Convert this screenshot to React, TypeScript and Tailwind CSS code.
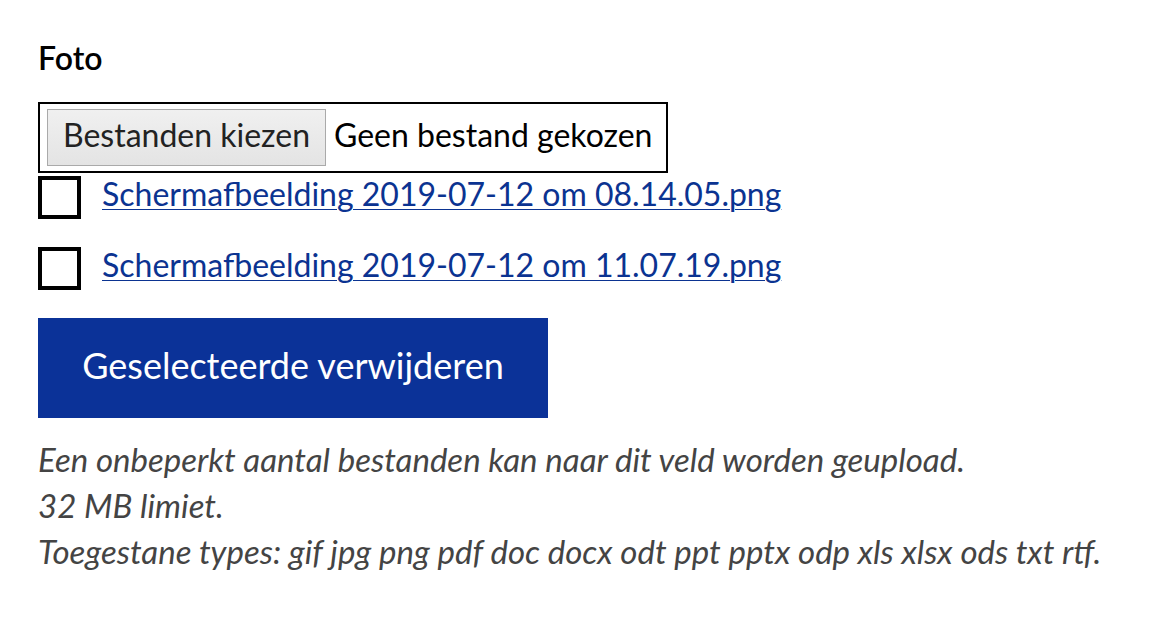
export default function App() {
  const files = [
    "Schermafbeelding 2019-07-12 om 08.14.05.png",
    "Schermafbeelding 2019-07-12 om 11.07.19.png",
  ];
  return (
    <div className="min-h-screen bg-white pl-[38px] pt-[39px] font-['Lato',sans-serif] text-black">
      <div className="text-[32px] font-semibold leading-[38px]">Foto</div>

      <div className="mt-[25px] inline-flex h-[71px] w-[630px] items-center border-2 border-black pl-[7px]">
        <div className="flex h-[57px] w-[279px] items-center justify-center border border-[#aaa] bg-gradient-to-b from-[#f0f0f0] to-[#e4e4e4] pb-[6px] text-[32px] text-[#222]">
          Bestanden kiezen
        </div>
        <div className="ml-[8px] -mt-[6px] whitespace-nowrap text-[32px]">Geen bestand gekozen</div>
      </div>

      <div className="mt-[3px] flex flex-col gap-[28px]">
        {files.map((f) => (
          <div key={f} className="flex h-[43px] items-center">
            <div className="h-[43px] w-[43px] border-[4px] border-black" />
            <a href="#" className="ml-[21px] -mt-[8px] text-[32px] text-[#0b3391] underline decoration-1 underline-offset-[3px]">
              {f}
            </a>
          </div>
        ))}
      </div>

      <button className="mt-[28px] flex h-[100px] w-[510px] items-center justify-center bg-[#0b3298] pb-[6px] text-[36px] text-white">
        Geselecteerde verwijderen
      </button>

      <div className="mt-[18px] text-[33px] italic leading-[46px] text-[#444]">
        <div>Een onbeperkt aantal bestanden kan naar dit veld worden geupload.</div>
        <div>32 MB limiet.</div>
        <div>Toegestane types: gif jpg png pdf doc docx odt ppt pptx odp xls xlsx ods txt rtf.</div>
      </div>
    </div>
  );
}
